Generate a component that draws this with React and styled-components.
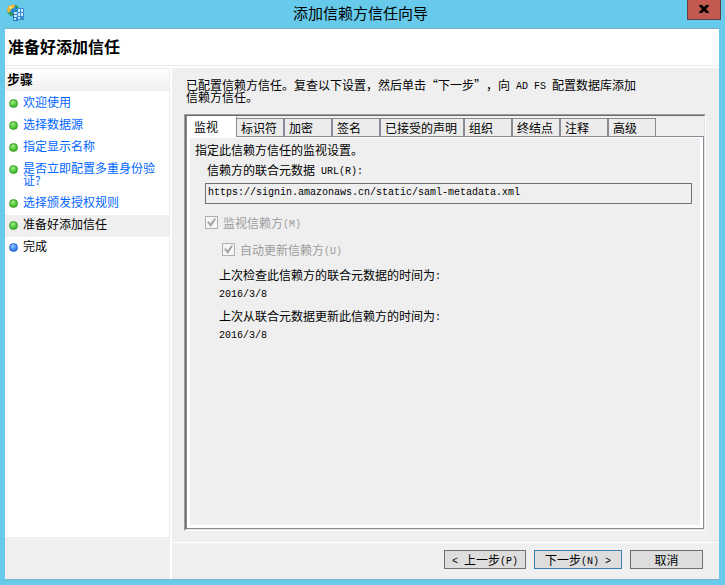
import styled, {createGlobalStyle, css} from "styled-components";
import React,{useState} from "react";

const GlobalStyle = createGlobalStyle`
    *, *::before, *::after {
        box-sizing: border-box;
    }
    body {
        margin: 0;
        background-color: #67caea;
        color: #000;
        font-family: "Noto Sans CJK SC", sans-serif;
        font-size: 12px;
        line-height: 16px;
        text-spacing-trim: space-all;
    }
    button, input {
        font: inherit;
        color: inherit;
        margin: 0;
    }
    p, h1, h2, ol {
        margin: 0;
        padding: 0;
    }
`;

// Window frame
const Window = styled.div`
    min-height: 100vh;
    display: flex;
    flex-direction: column;
    background-color: #67caea;
`;

const TitleBar = styled.header`
    height: 28px;
    padding-right: 4px;
    display: grid;
    grid-template-columns: 1fr auto 1fr;
    align-items: start;
`;

const AppIcon = styled.svg`
    width: 17px;
    height: 18px;
    margin: 4px 0 0 7px;
`;

const Title = styled.h1`
    font-size: 15px;
    font-weight: 400;
    line-height: 26px;
`;

const CloseButton = styled.button`
    justify-self: end;
    width: 34px;
    height: 20px;
    padding: 0 0 2px;
    display: flex;
    align-items: center;
    justify-content: center;
    border: 1px solid #5d3f48;
    border-top: 0;
    background-color: #c35a50;
`;

const Client = styled.div`
    flex: 1;
    margin: 0 6px 5px 5px;
    display: flex;
    flex-direction: column;
    border-top: 1px solid #7eaccb;
    border-bottom: 1px solid #7eb4d0;
    background-color: #fff;
`;

const PageTitle = styled.h2`
    height: 37px;
    padding-left: 3px;
    border-bottom: 1px solid #ececec;
    font-size: 16px;
    font-weight: 700;
    line-height: 34px;
`;

const Columns = styled.div`
    flex: 1;
    display: flex;
    gap: 2px;
    padding-top: 2px;
`;

// Sidebar with the list of steps
const Sidebar = styled.nav`
    width: 165px;
    flex-shrink: 0;
    display: flex;
    flex-direction: column;
    background-color: #efefef;
`;

const StepsPanel = styled.div`
    flex: 1;
    margin-bottom: 42px;
    border-right: 1px solid #ececec;
    background-color: #fff;
`;

const StepsTitle = styled.h2`
    height: 23px;
    padding-left: 2px;
    border-top: 1px solid #ececec;
    background: linear-gradient(#fff, #f0f0f0);
    font-size: 13px;
    font-weight: 700;
    line-height: 20px;
`;

const StepList = styled.ol`
    padding-top: 2px;
    list-style: none;
`;

const Step = styled.li`
    display: flex;
    align-items: center;
    gap: 5px;
    min-height: 22px;
    padding: 3px 8px 7px 4px;
    line-height: 12px;
    background-color: ${props => props.$current ? "#efefef" : "transparent"};
    ${props => props.$tall && css`
        align-items: flex-start;
    `}
`;

const Dot = styled.span`
    width: 9px;
    height: 9px;
    margin-top: 3px;
    flex-shrink: 0;
    border-radius: 50%;
    border: 1px solid ${props => props.$blue ? "#2a62c8" : "#3a9a2c"};
    background: ${props => props.$blue
        ? "radial-gradient(circle at 40% 30%, #9cc8ff, #2f7df0 65%)"
        : "radial-gradient(circle at 40% 30%, #a4ec84, #3fc02c 65%)"};
`;

const StepLink = styled.a`
    color: #0066ff;
    text-decoration: none;
`;

// Right side: intro, tabs and footer
const Main = styled.main`
    flex: 1;
    min-width: 0;
    display: flex;
    flex-direction: column;
    background-color: #efefef;
`;

const Content = styled.div`
    flex: 1;
    display: flex;
    flex-direction: column;
    padding: 11px 13px 11px 12px;
    border-bottom: 1px solid #fff;
`;

const Intro = styled.p`
    max-width: 456px;
    min-height: 35px;
    padding-left: 2px;
    line-height: 12px;
`;

const Latin = styled.span`
    font-family: "Liberation Mono", monospace;
    font-size: 10px;
    line-height: 0;
    vertical-align: 1px;
    white-space: pre;
`;

const TabBox = styled.section`
    flex: 1;
    display: flex;
    flex-direction: column;
    border: 1px solid #fff;
    border-top-color: #a0a0a0;
    border-left-color: #a0a0a0;
`;

const TabFrame = styled.div`
    flex: 1;
    display: flex;
    flex-direction: column;
    border: 1px solid #e3e3e3;
    border-top-color: #696969;
    border-left-color: #696969;
`;

const TabRow = styled.div`
    height: 21px;
    display: flex;
    align-items: flex-end;
    border-left: 1px solid #898c95;
`;

const Tab = styled.button`
    height: 19px;
    padding: 0 6px 0 4px;
    min-width: 48px;
    text-align: left;
    line-height: 17px;
    white-space: nowrap;
    border: 1px solid #898c95;
    background-color: #ececec;
    ${props => props.$active && css`
        height: 21px;
        min-width: 50px;
        margin-right: -1px;
        padding-left: 6px;
        border-color: #fff #898c95 #fff #fff;
        background-color: #fff;
    `}
`;

const TabPanel = styled.div`
    flex: 1;
    border: 1px solid #898c95;
    border-top: 0;
    padding: 1px 3px 3px;
    display: flex;
    background-color: #fff;
`;

const TabLine = styled.span`
    flex: 1;
    align-self: stretch;
    border-bottom: 1px solid #898c95;
`;

const Form = styled.div`
    flex: 1;
    padding: 4px 8px 4px 5px;
    background-color: #efefef;
`;

const Indented = styled.div`
    padding-left: 10px;
    display: flex;
    flex-direction: column;
`;

const FieldLabel = styled.label`
    height: 25px;
    padding: 4px 0 0 2px;
`;

const UrlInput = styled.input`
    width: 100%;
    height: 21px;
    padding: 0 2px 3px;
    border: 1px solid #707070;
    border-radius: 0;
    background-color: #efefef;
    font-family: "Liberation Mono", monospace;
    font-size: 10px;
`;

const CheckLabel = styled.label`
    display: flex;
    align-items: center;
    gap: 5px;
    height: 15px;
    line-height: 15px;
    margin-top: ${props => props.$nested ? "12px" : "11px"};
    padding-left: ${props => props.$nested ? "17px" : "0"};
    color: #9c9c9c;
`;

const CheckBox = styled.input`
    appearance: none;
    width: 13px;
    height: 13px;
    display: grid;
    place-items: center;
    border: 1px solid #b0b0b0;
    background-color: #f6f6f6;

    &:checked::before {
        content: "";
        width: 9px;
        height: 9px;
        background-color: #9ea3a8;
        clip-path: polygon(0 45%, 20% 35%, 38% 60%, 85% 0, 100% 12%, 42% 100%);
    }
`;

const Stamp = styled.div`
    padding-left: 14px;
    margin-top: ${props => props.$first ? "9px" : "5px"};

    p {
        height: 18px;
        line-height: 18px;
    }
`;

const Footer = styled.footer`
    height: 36px;
    padding: 7px 16px 0;
    display: flex;
    justify-content: flex-end;
    gap: 8px;
`;

const Button = styled.button`
    min-width: 73px;
    height: 19px;
    padding: 0 7px;
    line-height: 17px;
    border: 1px solid ${props => props.$default ? "#3c7fb1" : "#707070"};
    background-color: #dddddd;
    ${props => props.$default && css`
        padding: 0 10px;
    `}
`;

const steps = [
    {name: "欢迎使用"},
    {name: "选择数据源"},
    {name: "指定显示名称"},
    {name: "是否立即配置多重身份验证?", tall: true},
    {name: "选择颁发授权规则"},
    {name: "准备好添加信任", current: true},
    {name: "完成", pending: true},
];

const tabs = ["监视", "标识符", "加密", "签名", "已接受的声明", "组织", "终结点", "注释", "高级"];

const App = ()=>{

    const [active,setActive] = useState("监视");

    return (
        <Window>
            <GlobalStyle/>
            <TitleBar>
                <AppIcon viewBox="0 0 17 18" aria-hidden="true">
                    <circle cx="6" cy="6.5" r="5.8" fill="#2a8fd0"/>
                    <path d="M0 5C1 1 5 0 8 1L7 4 4 5 3 8 1 9z" fill="#f0b92c"/>
                    <path d="M2 3l4-1-2 3z" fill="#fbe98a"/>
                    <path d="M1 9l3-1 3 2v3l-3-1z" fill="#2f9a4c"/>
                    <path d="M8 1c2 0 4 2 4 4l-3-1z" fill="#2f9a4c"/>
                    <path d="M6 7h5v10H6z" fill="#2d7dc4"/>
                    <path d="M10 4h7v12h-7z" fill="#3b8ccf"/>
                    <path d="M7 8h3v2H7zM7 11h3v2H7zM7 14h2v2H7zM11 5h2v3h-2zM14 5h2v3h-2zM11 9h2v3h-2zM14 9h2v3h-2zM11 13h2v2h-2z" fill="#c9e9fa"/>
                </AppIcon>
                <Title>添加信赖方信任向导</Title>
                <CloseButton aria-label="关闭">
                    <svg width="10" height="8" viewBox="0 0 10 8" aria-hidden="true">
                        <path d="M0 0h3l2 2 2-2h3v1L7 4l3 3v1H7L5 6 3 8H0V7l3-3-3-3z" fill="#000"/>
                    </svg>
                </CloseButton>
            </TitleBar>
            <Client>
                <PageTitle>准备好添加信任</PageTitle>
                <Columns>
                    <Sidebar>
                        <StepsPanel>
                            <StepsTitle>步骤</StepsTitle>
                            <StepList>
                                {steps.map(step => (
                                    <Step key={step.name} $current={step.current} $tall={step.tall}>
                                        <Dot $blue={step.pending}/>
                                        {step.current || step.pending
                                            ? <span>{step.name}</span>
                                            : <StepLink href="#">{step.name}</StepLink>}
                                    </Step>
                                ))}
                            </StepList>
                        </StepsPanel>
                    </Sidebar>
                    <Main>
                        <Content>
                            <Intro>
                                已配置信赖方信任。复查以下设置，然后单击“下一步”，向<Latin> AD FS </Latin>配置数据库添加信赖方信任。
                            </Intro>
                            <TabBox>
                                <TabFrame>
                                    <TabRow role="tablist">
                                        {tabs.map(tab => (
                                            <Tab
                                                key={tab}
                                                role="tab"
                                                aria-selected={tab === active}
                                                $active={tab === active}
                                                onClick={() => setActive(tab)}
                                            >
                                                {tab}
                                            </Tab>
                                        ))}
                                        <TabLine/>
                                    </TabRow>
                                    <TabPanel role="tabpanel">
                                        <Form>
                                            <p>指定此信赖方信任的监视设置。</p>
                                            <Indented>
                                                <FieldLabel htmlFor="url">信赖方的联合元数据<Latin> URL(R):</Latin></FieldLabel>
                                                <UrlInput id="url" readOnly value="https://signin.amazonaws.cn/static/saml-metadata.xml"/>
                                                <CheckLabel>
                                                    <CheckBox type="checkbox" defaultChecked disabled/>
                                                    <span>监视信赖方<Latin>(M)</Latin></span>
                                                </CheckLabel>
                                                <CheckLabel $nested>
                                                    <CheckBox type="checkbox" defaultChecked disabled/>
                                                    <span>自动更新信赖方<Latin>(U)</Latin></span>
                                                </CheckLabel>
                                                <Stamp $first>
                                                    <p>上次检查此信赖方的联合元数据的时间为<Latin>:</Latin></p>
                                                    <p><Latin>2016/3/8</Latin></p>
                                                </Stamp>
                                                <Stamp>
                                                    <p>上次从联合元数据更新此信赖方的时间为<Latin>:</Latin></p>
                                                    <p><Latin>2016/3/8</Latin></p>
                                                </Stamp>
                                            </Indented>
                                        </Form>
                                    </TabPanel>
                                </TabFrame>
                            </TabBox>
                        </Content>
                        <Footer>
                            <Button><Latin>&lt; </Latin>上一步<Latin>(P)</Latin></Button>
                            <Button $default>下一步<Latin>(N) &gt;</Latin></Button>
                            <Button>取消</Button>
                        </Footer>
                    </Main>
                </Columns>
            </Client>
        </Window>
    );
};
export default App;
